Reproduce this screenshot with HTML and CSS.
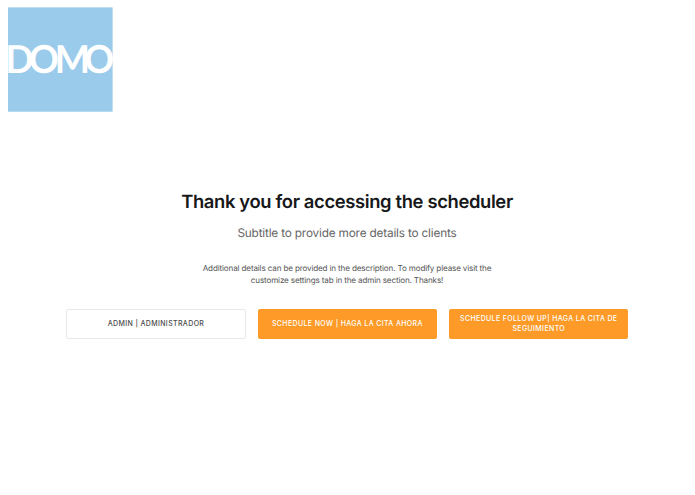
FILE: index.html
```html
<!DOCTYPE html>
<html lang="en">
<head>
<meta charset="utf-8">
<title>Scheduler</title>
<link rel="stylesheet" href="styles.css">
</head>
<body>
<header class="header">
  <svg class="logo" viewBox="0 0 105 105" role="img" aria-label="Domo">
    <rect class="logo-bg" y=".4" width="104.6" height="104.3"/>
    <text class="logo-word" transform="translate(0 66.2) scale(.97 1)" x="-2.9 21.3 48.2 78.4">DOMO</text>
  </svg>
</header>
<main class="content">
  <h1 class="title"><span>Thank you for accessing the scheduler</span></h1>
  <p class="subtitle"><span>Subtitle to provide more details to clients</span></p>
  <p class="description"><span>Additional details can be provided in the description. To modify please visit the<br>customize settings tab in the admin section. Thanks!</span></p>
  <nav class="actions">
    <button class="button button-outline"><span>ADMIN | ADMINISTRADOR</span></button>
    <button class="button"><span>SCHEDULE NOW | HAGA LA CITA AHORA</span></button>
    <button class="button"><span>SCHEDULE FOLLOW UP| HAGA LA CITA DE<br>SEGUIMIENTO</span></button>
  </nav>
</main>
</body>
</html>
```
FILE: styles.css
```css
* { box-sizing: border-box; }
body { margin: 0; min-height: 495px; background: #fff; color: #555; font-family: Inter, "Liberation Sans", sans-serif; text-rendering: geometricPrecision; }
.header { height: 112px; padding: 7px 0 0 7.9px; }
.logo { display: block; width: 105px; height: 105px; overflow: visible; }
.logo-bg { fill: #9bcbea; }
.logo-word { fill: #fff; font: 700 38.5px Lato, sans-serif; }
.content { padding: 76px 1px 0 0; text-align: center; }
.title { margin: 0; font-size: 18.4px; line-height: 28px; font-weight: 600; letter-spacing: -0.36px; color: #17181a; }
.subtitle { margin: 8px 0 0; font-size: 11.8px; line-height: 18px; letter-spacing: -0.18px; color: #666; }
.description { margin: 21px 0 0; font-size: 8.1px; line-height: 11.8px; letter-spacing: -0.15px; color: #555; }
.actions { display: grid; grid-template-columns: repeat(3, 179.4px); gap: 12px; margin: 22px 0 0 66.3px; }
.button { height: 30px; padding: 0; border: 0; border-radius: 2px; background: #fd9a28; color: #fff; font: 500 7px/9.5px Inter, "Liberation Sans", sans-serif; letter-spacing: 0.37px; }
.button-outline { border: 1px solid #e8e8e8; background: #fff; color: #4c4c4c; }
```
